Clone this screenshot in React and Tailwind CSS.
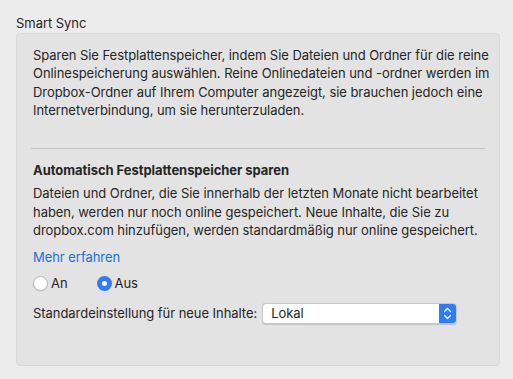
import React, { useState } from "react";

export default function App() {
  const [auto, setAuto] = useState(false);

  return (
    <div
      className="w-[513px] h-[379px] bg-[#ececec] pt-[15px] px-[16px] text-[13px] text-[#262626] tracking-[-0.05px]"
      style={{ fontFamily: "Inter, 'Liberation Sans', sans-serif" }}
    >
      <div className="leading-[16px] mb-[2px]">Smart Sync</div>
      <div className="w-[484px] h-[333px] bg-[#e3e3e3] border border-[#d9d9d9] rounded-[4px] pt-[12px]">
        <p className="px-[16px] leading-[18.3px] whitespace-nowrap">
          Sparen Sie Festplattenspeicher, indem Sie Dateien und Ordner für die reine
          <br />
          Onlinespeicherung auswählen. Reine Onlinedateien und -ordner werden im
          <br />
          Dropbox-Ordner auf Ihrem Computer angezeigt, sie brauchen jedoch eine
          <br />
          Internetverbindung, um sie herunterzuladen.
        </p>

        <div className="mx-[14px] mt-[29px] h-px bg-[#c4c4c4]" />

        <h3 className="px-[16px] mt-[12px] font-bold leading-[18px]">
          Automatisch Festplattenspeicher sparen
        </h3>
        <p className="px-[16px] mt-[5px] leading-[18.5px] whitespace-nowrap">
          Dateien und Ordner, die Sie innerhalb der letzten Monate nicht bearbeitet
          <br />
          haben, werden nur noch online gespeichert. Neue Inhalte, die Sie zu
          <br />
          dropbox.com hinzufügen, werden standardmäßig nur online gespeichert.
        </p>

        <a className="block px-[16px] mt-[8px] leading-[18px] text-[#1c6fd6]">
          Mehr erfahren
        </a>

        <div className="flex items-center px-[16px] mt-[9px] h-[18px]">
          <button onClick={() => setAuto(true)} className="flex items-center gap-[3px]">
            <Radio checked={auto} />
            <span>An</span>
          </button>
          <button onClick={() => setAuto(false)} className="flex items-center gap-[3px] ml-[29px]">
            <Radio checked={!auto} />
            <span>Aus</span>
          </button>
        </div>

        <div className="flex items-center px-[16px] mt-[10px]">
          <span className="leading-[18px]">Standardeinstellung für neue Inhalte:</span>
          <div className="ml-[5px] w-[195px] h-[21px] flex bg-white rounded-[4px] border border-[#c8c8c8] shadow-[0_0.5px_1px_rgba(0,0,0,0.15)] overflow-hidden">
            <span className="flex-1 pl-[8px] leading-[19px]">Lokal</span>
            <div className="w-[17px] bg-[#2f7cf6] flex items-center justify-center">
              <svg width="9" height="13" viewBox="0 0 9 13" fill="none" stroke="white" strokeWidth="1.4" strokeLinecap="round" strokeLinejoin="round">
                <path d="M1.5 4.5 L4.5 1.5 L7.5 4.5" />
                <path d="M1.5 8.5 L4.5 11.5 L7.5 8.5" />
              </svg>
            </div>
          </div>
        </div>
      </div>
    </div>
  );
}

function Radio({ checked }) {
  if (checked) {
    return (
      <span className="w-[15px] h-[15px] rounded-full bg-[#2f7cf6] flex items-center justify-center">
        <span className="w-[5px] h-[5px] rounded-full bg-white" />
      </span>
    );
  }
  return (
    <span className="w-[15px] h-[15px] rounded-full bg-white border border-[#b5b5b5] shadow-[0_0.5px_1px_rgba(0,0,0,0.1)]" />
  );
}
